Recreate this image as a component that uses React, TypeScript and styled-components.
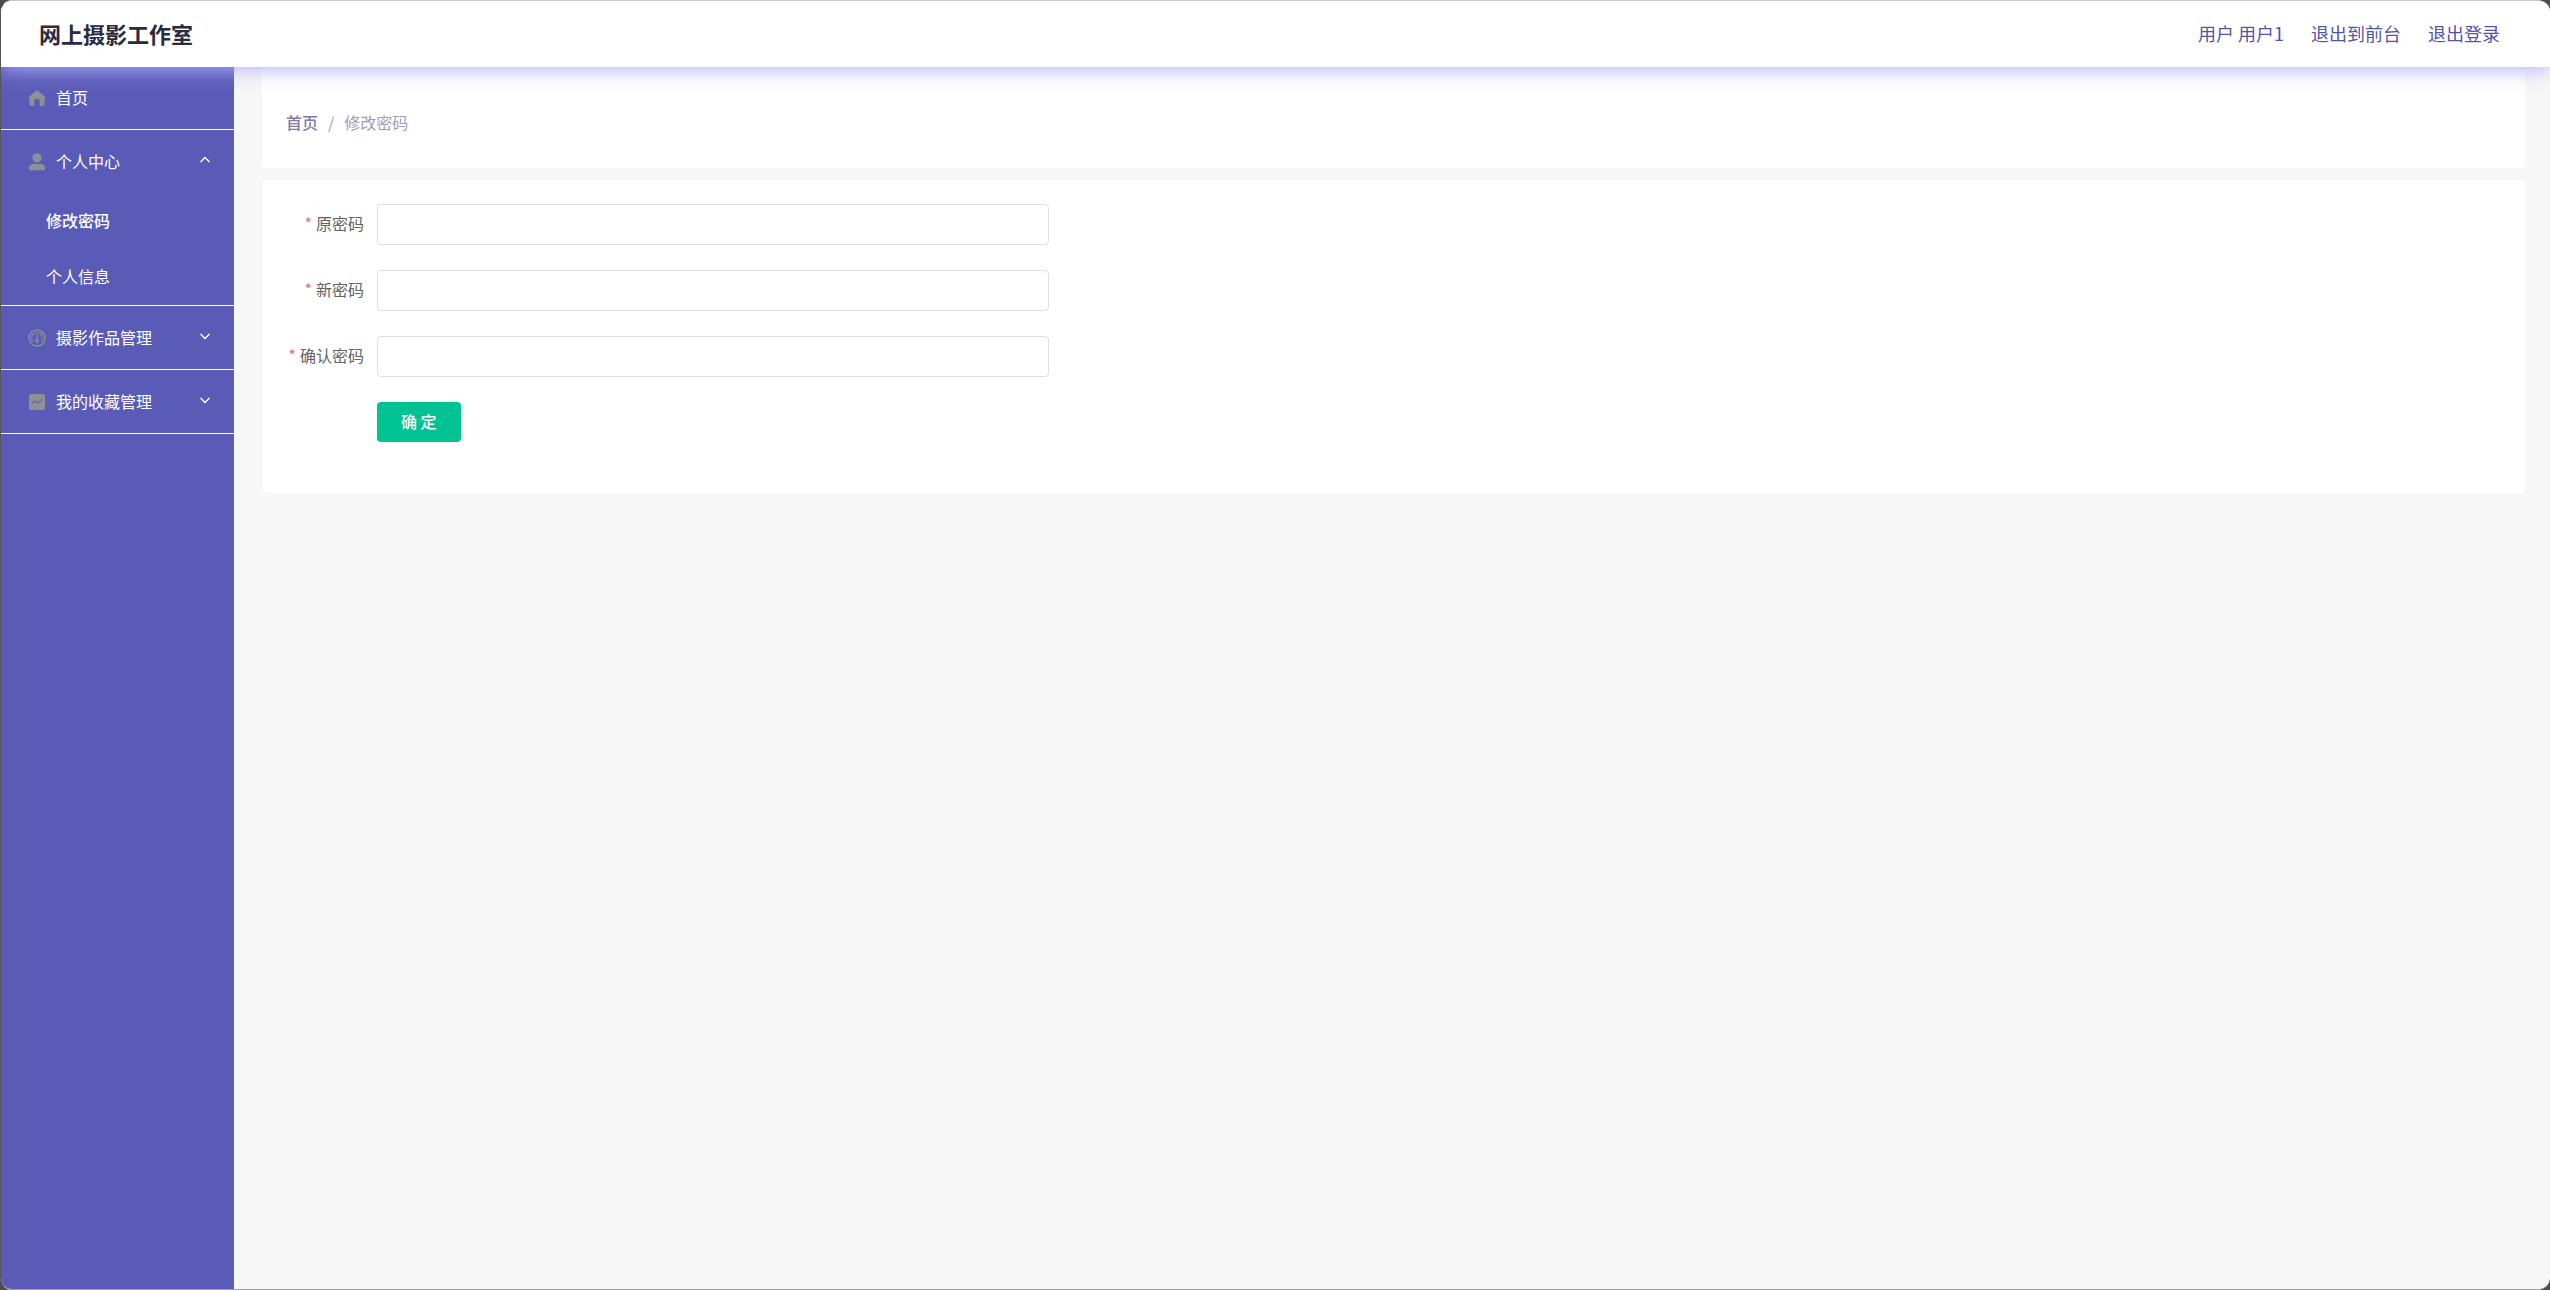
import React from 'react';
import styled, { createGlobalStyle } from 'styled-components';

const GlobalStyle = createGlobalStyle`
  *, *::before, *::after { box-sizing: border-box; }
  body {
    margin: 0;
    background: #4a4a52;
    font-family: "Noto Sans CJK SC", sans-serif;
    font-size: 16px;
    line-height: 24px;
  }
  a { color: inherit; text-decoration: none; }
  ul, ol { margin: 0; padding: 0; list-style: none; }
`;

const Shell = styled.div`
  display: flex;
  flex-direction: column;
  min-height: 100vh;
  border: 1px solid #55555c;
  border-top-color: #c8c8c8;
  border-right: 0;
  border-bottom-color: #a0a0a0;
  border-radius: 12px;
  overflow: hidden;
  background: #f7f7f7;
`;

const Header = styled.header`
  display: flex;
  align-items: center;
  justify-content: space-between;
  height: 66px;
  padding: 0 50px 3px 38px;
  background: #fff;
  box-shadow: 0 2px 20px #b1aeff;
  position: relative;
  z-index: 1;
`;

const Brand = styled.h1`
  margin: 0;
  font-size: 22px;
  line-height: 32px;
  font-weight: 700;
  color: #2a2a40;
`;

const UserNav = styled.nav`
  display: flex;
  gap: 27px;
  font-size: 18px;
  color: #5454a4;
`;

const Body = styled.div`
  display: flex;
  flex: 1;
`;

const Sidebar = styled.aside`
  width: 233px;
  flex-shrink: 0;
  background: #5a5bb7;
  color: #fff;
`;

const MenuItem = styled.li`
  border-bottom: 1px solid #fff;
`;

const menuRow = `
  display: flex;
  align-items: center;
  width: 100%;
  height: 63px;
  padding: 0 21px 0 27px;
  gap: 10px;
  border: 0;
  background: none;
  color: inherit;
  font: inherit;
  text-align: left;
  cursor: pointer;
`;

const MenuLink = styled.a`
  ${menuRow}
  height: 62px;
`;
const MenuButton = styled.button`${menuRow}`;

const MenuLabel = styled.span`
  flex: 1;
  padding-bottom: 2px;
`;

const SubLink = styled.a<{ $active?: boolean }>`
  display: flex;
  align-items: center;
  height: 56px;
  padding: 0 0 2px 45px;
  font-weight: ${p => (p.$active ? 500 : 400)};
`;

const Icon = styled.svg`
  width: 18px;
  height: 18px;
  flex-shrink: 0;
  color: #8f9096;
`;

const Chevron = styled.svg<{ $open?: boolean }>`
  width: 16px;
  height: 16px;
  flex-shrink: 0;
  margin-bottom: 4px;
  transform: ${p => (p.$open ? 'rotate(180deg)' : 'none')};
`;

const Main = styled.main`
  flex: 1;
  display: flex;
  flex-direction: column;
  gap: 12px;
  padding: 0 25px 27px 28px;
`;

const Card = styled.section`
  background: #fff;
  border-radius: 4px;
`;

const CrumbCard = styled(Card)`
  display: flex;
  align-items: center;
  height: 101px;
  padding: 8px 24px 0;
`;

const Crumbs = styled.ol`
  display: flex;
  gap: 10px;
  color: #9c9cc0;
`;

const CrumbHome = styled.a`
  font-weight: 500;
  color: #7c7ca4;
`;

const FormCard = styled(Card)`
  padding: 24px 24px 51px 10px;
`;

const Form = styled.form`
  display: flex;
  flex-direction: column;
  gap: 25px;
`;

const Field = styled.div`
  display: grid;
  grid-template-columns: 92px minmax(0, 672px);
  column-gap: 13px;
  align-items: center;
`;

const Label = styled.label`
  display: flex;
  justify-content: flex-end;
  gap: 4px;
  padding-bottom: 3px;
  white-space: nowrap;
  color: #606266;
`;

const Star = styled.span`
  color: #f56c6c;
`;

const Input = styled.input`
  width: 100%;
  height: 41px;
  padding: 0 16px;
  border: 1px solid #dedfe3;
  border-radius: 4px;
  background: #fff;
  font: inherit;
  color: #606266;
`;

const Submit = styled.button`
  grid-column: 2;
  justify-self: start;
  height: 40px;
  padding: 0 24px 2px;
  border: 0;
  border-radius: 4px;
  background: #00c292;
  color: #fff;
  font: inherit;
  font-weight: 500;
  cursor: pointer;
`;

const HomeIcon = () => (
  <Icon viewBox="0 0 18 18" fill="currentColor" aria-hidden="true">
    <path d="M7.800 2.100a2 2 0 0 1 2.400 0l6.800 5.700c1 .9.600 2.200-.6 2.200v5.600a1.200 1.200 0 0 1-1.200 1.200h-3.400v-4.200a2.800 2.800 0 0 0-5.600 0v4.200H2.800a1.200 1.200 0 0 1-1.200-1.200V10C.4 10 0 8.700 1 7.800z" />
  </Icon>
);

const UserIcon = () => (
  <Icon viewBox="0 0 18 18" fill="currentColor" aria-hidden="true">
    <circle cx="9" cy="4.800" r="4.600" />
    <path d="M.8 15.400c0-2.700 1.800-4.400 4.400-4.400h7.600c2.600 0 4.400 1.700 4.400 4.400 0 1.200-.6 1.800-1.800 1.800H2.600C1.400 17.200.8 16.600.8 15.400z" />
  </Icon>
);

const GaugeIcon = () => (
  <Icon viewBox="0 0 18 18" fill="none" stroke="currentColor" aria-hidden="true">
    <circle cx="9" cy="9" r="8" strokeWidth="1.400" />
    <path d="M4.600 12.200a5.400 5.400 0 1 1 8.800 0" strokeWidth="1.200" />
    <path d="M9.600 5.500 9 11" strokeWidth="1.200" />
    <circle cx="9" cy="12" r="1.400" strokeWidth="1.200" />
  </Icon>
);

const ChartIcon = () => (
  <Icon viewBox="0 0 18 18" aria-hidden="true">
    <rect x="1" y="1" width="16" height="16" rx="1.500" fill="currentColor" />
    <path d="m4 11 3.200-3.200 2.600 2.400L14 6.500" fill="none" stroke="#6667a8" strokeWidth="1.300" />
  </Icon>
);

const Arrow = ({ open }: { open?: boolean }) => (
  <Chevron $open={open} viewBox="0 0 16 16" fill="none" stroke="currentColor" strokeWidth="1.400" aria-hidden="true">
    <path d="m3.500 6 4.500 4.500L12.500 6" />
  </Chevron>
);

const fields = [
  { id: 'old-password', label: '原密码' },
  { id: 'new-password', label: '新密码' },
  { id: 'confirm-password', label: '确认密码' },
];

export default function App() {
  return (
    <>
      <GlobalStyle />
      <Shell>
        <Header>
          <Brand>网上摄影工作室</Brand>
          <UserNav>
            <span>用户 用户1</span>
            <a href="#front">退出到前台</a>
            <a href="#logout">退出登录</a>
          </UserNav>
        </Header>
        <Body>
          <Sidebar>
            <ul>
              <MenuItem>
                <MenuLink href="#home"><HomeIcon /><MenuLabel>首页</MenuLabel></MenuLink>
              </MenuItem>
              <MenuItem>
                <MenuButton type="button" aria-expanded="true">
                  <UserIcon /><MenuLabel>个人中心</MenuLabel><Arrow open />
                </MenuButton>
                <SubLink href="#password" $active>修改密码</SubLink>
                <SubLink href="#profile">个人信息</SubLink>
              </MenuItem>
              <MenuItem>
                <MenuButton type="button" aria-expanded="false">
                  <GaugeIcon /><MenuLabel>摄影作品管理</MenuLabel><Arrow />
                </MenuButton>
              </MenuItem>
              <MenuItem>
                <MenuButton type="button" aria-expanded="false">
                  <ChartIcon /><MenuLabel>我的收藏管理</MenuLabel><Arrow />
                </MenuButton>
              </MenuItem>
            </ul>
          </Sidebar>
          <Main>
            <CrumbCard>
              <Crumbs>
                <li><CrumbHome href="#home">首页</CrumbHome></li>
                <li>/</li>
                <li>修改密码</li>
              </Crumbs>
            </CrumbCard>
            <FormCard>
              <Form>
                {fields.map(f => (
                  <Field key={f.id}>
                    <Label htmlFor={f.id}><Star>*</Star>{f.label}</Label>
                    <Input id={f.id} type="password" />
                  </Field>
                ))}
                <Field>
                  <Submit type="button">确 定</Submit>
                </Field>
              </Form>
            </FormCard>
          </Main>
        </Body>
      </Shell>
    </>
  );
}
